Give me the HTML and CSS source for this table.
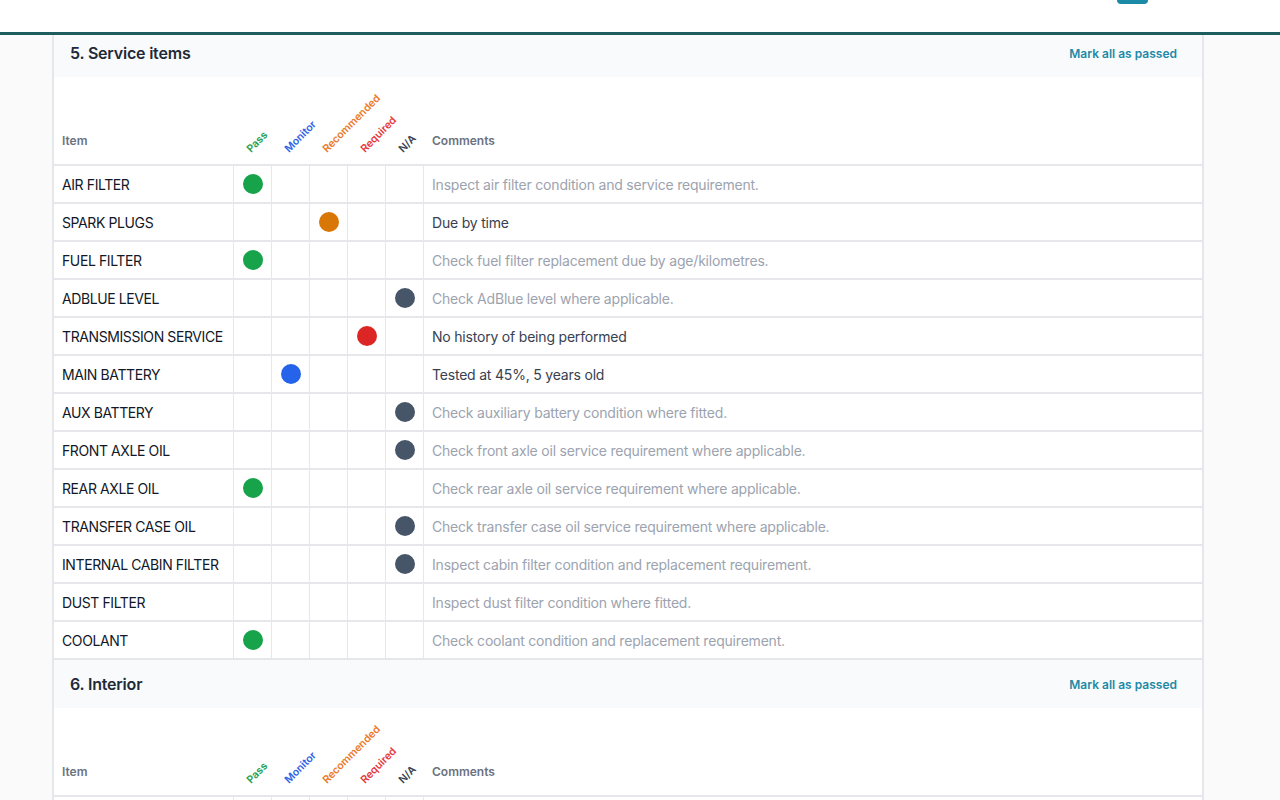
FILE: index.html
```html
<!DOCTYPE html>
<html lang="en">
<head>
<meta charset="utf-8">
<title>Inspection</title>
<link rel="stylesheet" href="styles.css">
</head>
<body>
<header class="topbar">
  <span class="topbtn"></span>
</header>
<main class="page">
  <div class="panel">
    <section class="section">
      <div class="section-head">
        <h2 class="section-title">5. Service items</h2>
        <a class="mark-all" href="#">Mark all as passed</a>
      </div>
      <table class="grid">
        <colgroup>
          <col class="col-item"><col class="col-c"><col class="col-c"><col class="col-c"><col class="col-c"><col class="col-c"><col>
        </colgroup>
        <thead>
          <tr>
            <th class="th-item">Item</th>
            <th class="th-rot"><span class="rot pass-t">Pass</span></th>
            <th class="th-rot"><span class="rot mon-t">Monitor</span></th>
            <th class="th-rot"><span class="rot rec-t">Recommended</span></th>
            <th class="th-rot"><span class="rot req-t">Required</span></th>
            <th class="th-rot"><span class="rot na-t">N/A</span></th>
            <th class="th-item">Comments</th>
          </tr>
        </thead>
        <tbody>
          <tr><td class="name">AIR FILTER</td><td class="c"><span class="dot pass"></span></td><td class="c"></td><td class="c"></td><td class="c"></td><td class="c"></td><td class="cm ph">Inspect air filter condition and service requirement.</td></tr>
          <tr><td class="name">SPARK PLUGS</td><td class="c"></td><td class="c"></td><td class="c"><span class="dot rec"></span></td><td class="c"></td><td class="c"></td><td class="cm">Due by time</td></tr>
          <tr><td class="name">FUEL FILTER</td><td class="c"><span class="dot pass"></span></td><td class="c"></td><td class="c"></td><td class="c"></td><td class="c"></td><td class="cm ph">Check fuel filter replacement due by age/kilometres.</td></tr>
          <tr><td class="name">ADBLUE LEVEL</td><td class="c"></td><td class="c"></td><td class="c"></td><td class="c"></td><td class="c"><span class="dot na"></span></td><td class="cm ph">Check AdBlue level where applicable.</td></tr>
          <tr><td class="name">TRANSMISSION SERVICE</td><td class="c"></td><td class="c"></td><td class="c"></td><td class="c"><span class="dot req"></span></td><td class="c"></td><td class="cm">No history of being performed</td></tr>
          <tr><td class="name">MAIN BATTERY</td><td class="c"></td><td class="c"><span class="dot mon"></span></td><td class="c"></td><td class="c"></td><td class="c"></td><td class="cm">Tested at 45%, 5 years old</td></tr>
          <tr><td class="name">AUX BATTERY</td><td class="c"></td><td class="c"></td><td class="c"></td><td class="c"></td><td class="c"><span class="dot na"></span></td><td class="cm ph">Check auxiliary battery condition where fitted.</td></tr>
          <tr><td class="name">FRONT AXLE OIL</td><td class="c"></td><td class="c"></td><td class="c"></td><td class="c"></td><td class="c"><span class="dot na"></span></td><td class="cm ph">Check front axle oil service requirement where applicable.</td></tr>
          <tr><td class="name">REAR AXLE OIL</td><td class="c"><span class="dot pass"></span></td><td class="c"></td><td class="c"></td><td class="c"></td><td class="c"></td><td class="cm ph">Check rear axle oil service requirement where applicable.</td></tr>
          <tr><td class="name">TRANSFER CASE OIL</td><td class="c"></td><td class="c"></td><td class="c"></td><td class="c"></td><td class="c"><span class="dot na"></span></td><td class="cm ph">Check transfer case oil service requirement where applicable.</td></tr>
          <tr><td class="name">INTERNAL CABIN FILTER</td><td class="c"></td><td class="c"></td><td class="c"></td><td class="c"></td><td class="c"><span class="dot na"></span></td><td class="cm ph">Inspect cabin filter condition and replacement requirement.</td></tr>
          <tr><td class="name">DUST FILTER</td><td class="c"></td><td class="c"></td><td class="c"></td><td class="c"></td><td class="c"></td><td class="cm ph">Inspect dust filter condition where fitted.</td></tr>
          <tr><td class="name">COOLANT</td><td class="c"><span class="dot pass"></span></td><td class="c"></td><td class="c"></td><td class="c"></td><td class="c"></td><td class="cm ph">Check coolant condition and replacement requirement.</td></tr>
        </tbody>
      </table>
    </section>
    <section class="section">
      <div class="section-head">
        <h2 class="section-title">6. Interior</h2>
        <a class="mark-all" href="#">Mark all as passed</a>
      </div>
      <table class="grid">
        <colgroup>
          <col class="col-item"><col class="col-c"><col class="col-c"><col class="col-c"><col class="col-c"><col class="col-c"><col>
        </colgroup>
        <thead>
          <tr>
            <th class="th-item">Item</th>
            <th class="th-rot"><span class="rot pass-t">Pass</span></th>
            <th class="th-rot"><span class="rot mon-t">Monitor</span></th>
            <th class="th-rot"><span class="rot rec-t">Recommended</span></th>
            <th class="th-rot"><span class="rot req-t">Required</span></th>
            <th class="th-rot"><span class="rot na-t">N/A</span></th>
            <th class="th-item">Comments</th>
          </tr>
        </thead>
        <tbody>
          <tr><td class="name">SEATS &amp; TRIM</td><td class="c"></td><td class="c"></td><td class="c"></td><td class="c"></td><td class="c"></td><td class="cm ph">Inspect seats and trim condition.</td></tr>
          <tr><td class="name">SEAT BELTS</td><td class="c"></td><td class="c"></td><td class="c"></td><td class="c"></td><td class="c"></td><td class="cm ph">Check seat belt operation and condition.</td></tr>
        </tbody>
      </table>
    </section>
  </div>
</main>
</body>
</html>
```
FILE: styles.css
```css
* { box-sizing: border-box; }

html, body {
  margin: 0;
  padding: 0;
}

body {
  background: #fafafa;
  font-family: Inter, "Noto Sans", "Liberation Sans", sans-serif;
  color: #111827;
}

.topbar {
  position: fixed;
  top: 0;
  left: 0;
  right: 0;
  height: 35px;
  background: #ffffff;
  border-bottom: 3px solid #1e5d5d;
  z-index: 10;
  display: flex;
  justify-content: flex-end;
  align-items: flex-start;
  padding-right: 132px;
}

.topbtn {
  display: block;
  width: 31px;
  height: 4px;
  background: #1a8aa6;
  border-radius: 0 0 5px 5px;
}

.page {
  padding: 29px 76px 0 52px;
}

.panel {
  background: #ffffff;
  border-left: 2px solid #e5e7eb;
  border-right: 2px solid #e5e7eb;
}

.section-head {
  height: 48px;
  background: #f9fafb;
  display: flex;
  align-items: center;
  justify-content: space-between;
  padding: 0 25px 0 16px;
}

.section-title {
  margin: 0;
  font-size: 16px;
  font-weight: 600;
  color: #1f2937;
  letter-spacing: -0.2px;
}

.mark-all {
  font-size: 12px;
  font-weight: 600;
  color: #1f8aa6;
  text-decoration: none;
}

.grid {
  width: 100%;
  table-layout: fixed;
  border-collapse: separate;
  border-spacing: 0;
}

.col-item { width: 180px; }
.col-c { width: 38px; }

.grid th {
  height: 89px;
  vertical-align: bottom;
  padding: 0 8px 16px;
  text-align: left;
  border-bottom: 2px solid #e5e7eb;
}

.th-item {
  font-size: 12px;
  font-weight: 600;
  color: #6b7280;
}

.th-rot {
  position: relative;
}

.rot {
  position: absolute;
  left: 19px;
  bottom: 9px;
  transform-origin: left bottom;
  transform: rotate(-45deg);
  font-size: 10.5px;
  font-weight: 600;
  white-space: nowrap;
  line-height: 12px;
}

.pass-t { color: #22a04f; }
.mon-t { color: #2d62e6; }
.rec-t { color: #ea7a2a; }
.req-t { color: #e5393b; }
.na-t { color: #374151; }

.grid td {
  height: 38px;
  border-bottom: 2px solid #e5e7eb;
  border-right: 1px solid #e5e7eb;
  font-size: 14px;
  padding: 0 8px;
  vertical-align: middle;
  letter-spacing: -0.2px;
}

.grid td:last-child {
  border-right: none;
}

.grid td.name {
  color: #111827;
  white-space: nowrap;
  letter-spacing: -0.4px;
}

.grid td.c {
  padding: 0;
  text-align: center;
}

.dot {
  display: inline-block;
  width: 20px;
  height: 20px;
  border-radius: 50%;
  vertical-align: middle;
}

.dot.pass { background: #16a34a; }
.dot.mon { background: #2563eb; }
.dot.rec { background: #d97706; }
.dot.req { background: #dc2626; }
.dot.na { background: #475569; }

.cm {
  color: #374151;
}

.cm.ph {
  color: #9ca3af;
}
```
